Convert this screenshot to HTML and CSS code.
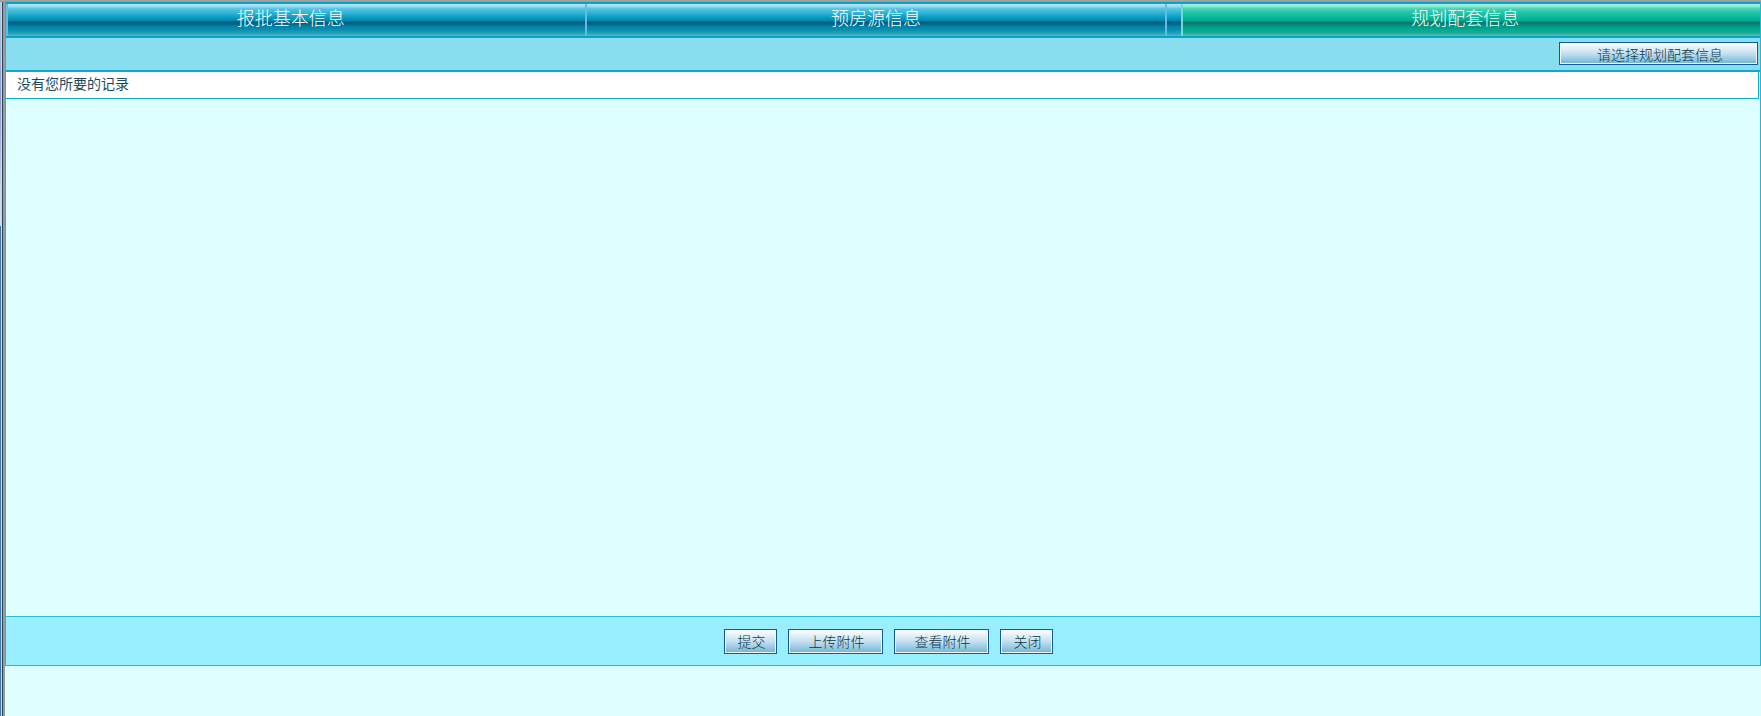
FILE: index.html
```
<!DOCTYPE html>
<html lang="zh-CN">
<head>
<meta charset="utf-8">
<title>规划配套信息</title>
<link rel="stylesheet" href="styles.css">
</head>
<body>
<div class="window">
  <main class="panel">
    <nav class="tabs">
      <button type="button" class="tab tab-inset">报批基本信息</button>
      <button type="button" class="tab">预房源信息</button>
      <span class="tab-spacer"></span>
      <button type="button" class="tab tab-inset tab-active">规划配套信息</button>
    </nav>
    <div class="toolbar">
      <button type="button" class="btn btn-select">请选择规划配套信息</button>
    </div>
    <p class="empty">没有您所要的记录</p>
    <div class="content"></div>
    <footer class="actions">
      <button type="button" class="btn">提交</button>
      <button type="button" class="btn btn-wide">上传附件</button>
      <button type="button" class="btn btn-wide">查看附件</button>
      <button type="button" class="btn">关闭</button>
    </footer>
  </main>
</div>
</body>
</html>
```
FILE: styles.css
```
* { box-sizing: border-box; }

body {
  margin: 0;
  background: #dff;
  color: #1c4a5c;
  font-family: "Noto Sans CJK SC", sans-serif;
  font-size: 14px;
}

.window {
  display: flex;
  min-height: 100vh;
  padding: 2px 0 50px 5px;
  background:
    linear-gradient(#a8a8a8, #8c9498) 0 0 / 100% 2px no-repeat,
    linear-gradient(#b8c8dc, #8c98c8 100px, #c8dcec 200px, #c8e0ec 226px) 0 0 / 1px 226px no-repeat,
    linear-gradient(90deg, #3f78a8 0 1px, #c8dce8 1px 2px, #2c4454 2px 3px, #949c9e 3px 5px) 0 0 / 5px 100% no-repeat,
    #dff;
}

.panel {
  display: flex;
  flex: 1;
  flex-direction: column;
  border: solid #2cb4d0;
  border-width: 0 1px 1px;
}

.tabs {
  display: grid;
  grid-template-columns: 1fr 1fr 16px 1fr;
  border: solid #08a4c8;
  border-width: 2px 0;
  background: #08a4c8;
}

.tab,
.tab-spacer {
  height: 32px;
  border: 0;
  border-left: 2px solid #64bce4;
  background: linear-gradient(#b8e8ff 0, #a0dcf4 2px, #50c4e0 5px, #30b4d4 9px, #0898bc 14px, #0484ac 17px, #005c80 18px, #006488 20px, #0080a4 22px, #0890b0 26px, #20a0b8 29px, #60b0c4 32px);
}

.tab {
  padding: 0 0 6px;
  color: #fff;
  font-family: inherit;
  font-size: 18px;
  font-weight: 300;
  line-height: 26px;
}

.tab-inset { padding-right: 12px; }

.tab-active {
  border-left-color: #70dccc;
  background: linear-gradient(#a8f4e0 0, #90ecd8 2px, #44d0b4 5px, #20c4a4 9px, #08b498 14px, #00a88c 17px, #047870 18px, #088074 20px, #009880 22px, #00a890 26px, #20ac98 29px, #60bca8 32px);
}

.toolbar {
  display: flex;
  justify-content: flex-end;
  height: 34px;
  padding: 4px 2px 0;
  border-bottom: 2px solid #10a8c8;
  background: #8de;
}

.empty {
  margin: 0 1px 0 0;
  padding: 0 11px 3px;
  border: solid #10acd0;
  border-width: 0 1px 1px 0;
  background: #fff;
  line-height: 23px;
}

.content { flex: 1; }

.actions {
  display: flex;
  align-items: center;
  justify-content: center;
  gap: 11px;
  height: 49px;
  padding-left: 10px;
  border-top: 1px solid #2cb8d8;
  background: #9ef;
}

.btn {
  width: 53px;
  height: 25px;
  padding: 0 0 0 3px;
  border: 1px solid #145c90;
  box-shadow: inset 0 0 0 1px #f4faff;
  background: linear-gradient(#fff, #c4e0f0 50%, #70b4d8);
  color: #0c3848;
  font-family: inherit;
  font-size: 14px;
  font-weight: 300;
  line-height: 22px;
}

.btn-wide { width: 95px; }

.btn-select {
  width: 199px;
  height: 23px;
}
```
